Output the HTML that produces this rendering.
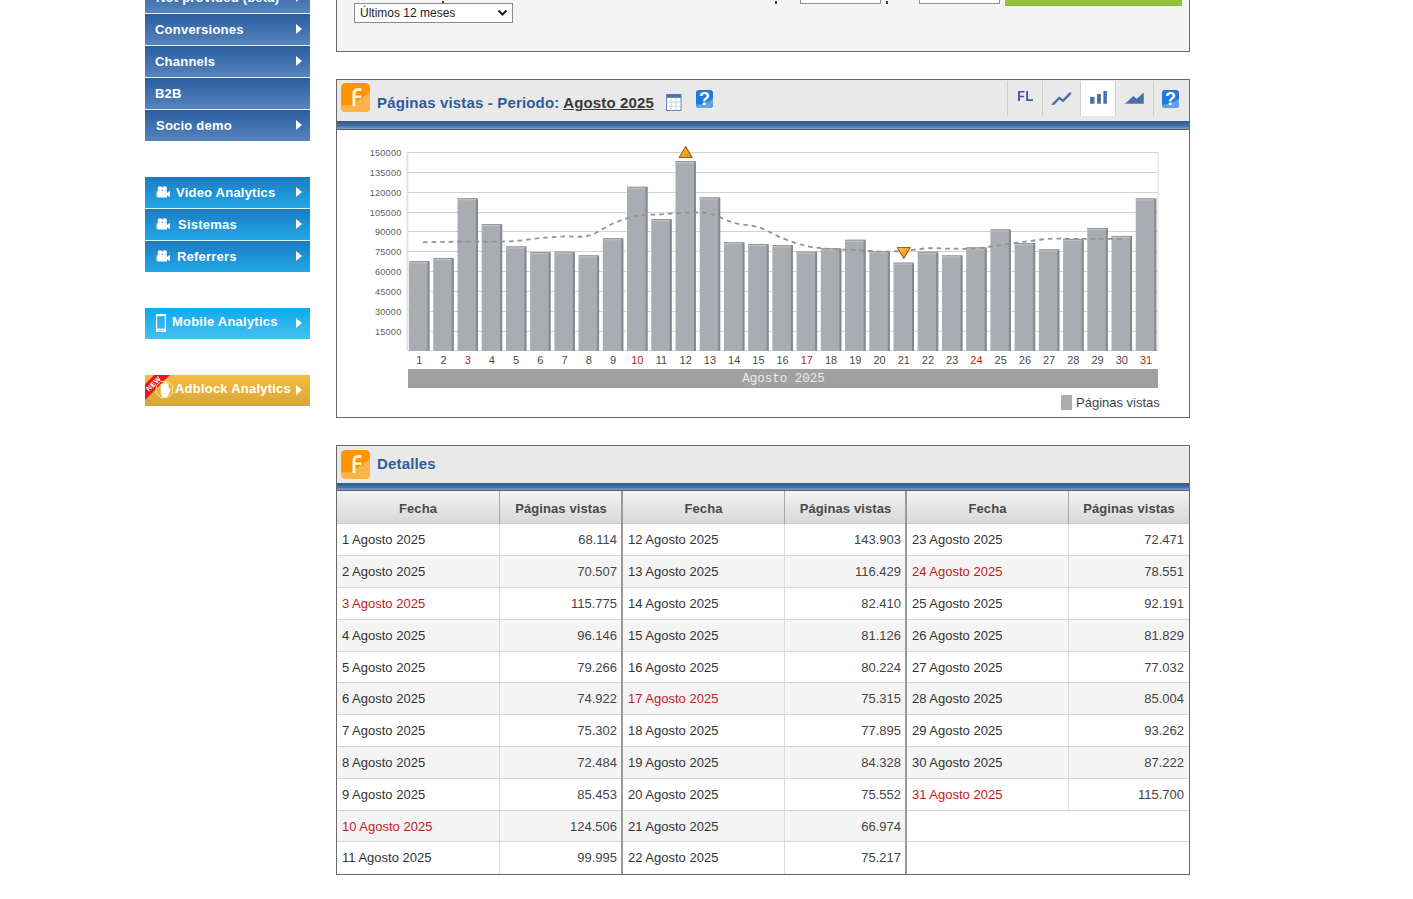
<!DOCTYPE html>
<html><head><meta charset="utf-8">
<style>
*{box-sizing:border-box;margin:0;padding:0}
html,body{width:1413px;height:899px;overflow:hidden;background:#fff;font-family:"Liberation Sans",sans-serif}
.abs{position:absolute}
.nav{position:absolute;left:145px;width:165px;height:31px;color:#fff;font-weight:bold;font-size:13px;line-height:31px;white-space:nowrap;letter-spacing:0.22px}
.dk{background:linear-gradient(#2b5c9e,#3a6cab 35%,#5584bb)}
.lb{background:linear-gradient(#1c7bc0,#1f95d6 55%,#22a6e6)}
.mb{background:linear-gradient(#0eaaee,#2bb6f0 55%,#47c1ef)}
.ad{background:linear-gradient(#f5be3b,#e7b03c 55%,#d6a33d)}
.sep{position:absolute;left:145px;width:165px;height:1px;background:#e6f7ff}
.arr{position:absolute;left:151px;top:10px;width:0;height:0;border-left:6px solid #fff;border-top:5px solid transparent;border-bottom:5px solid transparent}
.panel{position:absolute;left:336px;width:854px;border:1px solid #6a6a6a}
.hdr{position:absolute;left:0;top:0;width:852px;background:#e9e9e9}
.stripe{position:absolute;left:0;width:852px;height:9px;background:linear-gradient(#3d5c82 0,#3d5c82 1px,#2d5f9b 1px,#4a7bb2 6px,#7d9ac0 7px,#7d9ac0 8px,#545f72 8px)}
.title{position:absolute;left:40px;font-weight:bold;font-size:15px;letter-spacing:0.16px;color:#2f5c9a;white-space:nowrap}
.ficon{position:absolute;left:4px;width:29px;height:29px}
.th{position:absolute;height:33px;line-height:35px;text-align:center;letter-spacing:0.1px;font-weight:bold;font-size:13px;color:#4a4a4a;background:linear-gradient(#f3f3f3,#e6e6e6 45%,#d8d8d8 97%,#cdcdcd 97%)}
.tr{position:absolute}
.td{position:absolute;font-size:13px;line-height:32px;color:#444;white-space:nowrap}
.num{text-align:right}
.vsep{position:absolute;width:1px;background:#dadada}
.hsep{position:absolute;height:1px;background:#d6d6d6}
</style></head><body>

<!-- sidebar -->
<div class="nav dk" style="top:-18px"><span class="abs" style="left:11px;top:0">Not provided (beta)</span><i class="arr"></i></div>
<div class="nav dk" style="top:14px"><span class="abs" style="left:10px">Conversiones</span><i class="arr" style="left:151px"></i></div>
<div class="nav dk" style="top:46px"><span class="abs" style="left:10px">Channels</span><i class="arr"></i></div>
<div class="nav dk" style="top:78px"><span class="abs" style="left:10px">B2B</span></div>
<div class="nav dk" style="top:110px"><span class="abs" style="left:11px">Socio demo</span><i class="arr"></i></div>
<div class="sep" style="top:13px"></div><div class="sep" style="top:45px"></div><div class="sep" style="top:77px"></div><div class="sep" style="top:109px"></div>

<div class="nav lb" style="top:177px"><svg class="abs" style="left:11px;top:9px" width="15" height="13" viewBox="0 0 15 13"><circle cx="4" cy="2.6" r="2.4" fill="#fff"/><circle cx="8.6" cy="2.6" r="2.4" fill="#fff"/><rect x="1.5" y="4.5" width="9.5" height="7" fill="#fff"/><path d="M0.5,5.5 L1.6,5.5 L1.6,10.5 L0.5,10.5Z" fill="#fff"/><path d="M11,7 L14,4.8 L14,11.2 L11,9Z" fill="#fff"/></svg><span class="abs" style="left:31px;top:-0.5px">Video Analytics</span><i class="arr"></i></div>
<div class="nav lb" style="top:209px"><svg class="abs" style="left:11px;top:9px" width="15" height="13" viewBox="0 0 15 13"><circle cx="4" cy="2.6" r="2.4" fill="#fff"/><circle cx="8.6" cy="2.6" r="2.4" fill="#fff"/><rect x="1.5" y="4.5" width="9.5" height="7" fill="#fff"/><path d="M0.5,5.5 L1.6,5.5 L1.6,10.5 L0.5,10.5Z" fill="#fff"/><path d="M11,7 L14,4.8 L14,11.2 L11,9Z" fill="#fff"/></svg><span class="abs" style="left:33px">Sistemas</span><i class="arr"></i></div>
<div class="nav lb" style="top:241px"><svg class="abs" style="left:11px;top:9px" width="15" height="13" viewBox="0 0 15 13"><circle cx="4" cy="2.6" r="2.4" fill="#fff"/><circle cx="8.6" cy="2.6" r="2.4" fill="#fff"/><rect x="1.5" y="4.5" width="9.5" height="7" fill="#fff"/><path d="M0.5,5.5 L1.6,5.5 L1.6,10.5 L0.5,10.5Z" fill="#fff"/><path d="M11,7 L14,4.8 L14,11.2 L11,9Z" fill="#fff"/></svg><span class="abs" style="left:32px">Referrers</span><i class="arr"></i></div>
<div class="sep" style="top:208px;background:#dff3fb"></div><div class="sep" style="top:240px;background:#dff3fb"></div>

<div class="nav mb" style="top:308px"><svg class="abs" style="left:11px;top:6px" width="10" height="18" viewBox="0 0 10 18"><rect x="0.6" y="0.6" width="8.8" height="16.8" fill="none" stroke="#fff" stroke-width="1.2"/><rect x="0" y="0" width="10" height="2.2" fill="#fff"/><rect x="0" y="14.6" width="10" height="3.4" fill="#fff"/><rect x="2.2" y="15.8" width="1.2" height="1" fill="#6ab8e0"/><rect x="4.4" y="15.8" width="1.2" height="1" fill="#6ab8e0"/><rect x="6.6" y="15.8" width="1.2" height="1" fill="#6ab8e0"/></svg><span class="abs" style="left:27px;top:-2px">Mobile Analytics</span><i class="arr"></i></div>

<div class="nav ad" style="top:375px;overflow:hidden"><svg class="abs" style="left:0;top:0" width="40" height="31" viewBox="0 0 40 31"><path d="M9.2,0 L25,0 L0,25 L0,9.2Z" fill="#e8141b"/><text x="0" y="0" transform="translate(8.5,8.7) rotate(-45)" text-anchor="middle" dominant-baseline="central" font-family="Liberation Sans" font-weight="bold" font-size="7.2" fill="#fff">NEW</text><path d="M16,6.3 L22.8,6.3 L27.6,11.1 L27.6,17.9 L22.8,22.7 L16,22.7 L11.2,17.9 L11.2,11.1Z" fill="none" stroke="#ffeaa6" stroke-width="1"/><path d="M16.6,9.6 L16.6,17.5 Q16.6,21.5 20,21.5 Q22.3,21.5 23.2,19 L24.6,14.4 Q24.4,13.3 23.4,13.9 L22.7,15.3 L22.7,9.2 M18.7,8.6 L18.7,15 M20.7,7.9 L20.7,15" fill="#fff" stroke="#fff" stroke-width="1.7" stroke-linecap="round" stroke-linejoin="round"/></svg><span class="abs" style="left:30px;top:-2px">Adblock Analytics</span><i class="arr"></i></div>

<!-- top panel -->
<div class="panel" style="top:-50px;height:102px;background:#f4f4f4">
  <div class="abs" style="left:17px;top:52px;width:159px;height:20px;background:#fff;border:1px solid #8a8a8a;font-size:12px;line-height:18px;color:#222;padding-left:5px">Últimos 12 meses<svg class="abs" style="left:142px;top:5px" width="11" height="8" viewBox="0 0 11 8"><path d="M1.5,1.5 L5.5,5.5 L9.5,1.5" fill="none" stroke="#222" stroke-width="2"/></svg></div>
  <div class="abs" style="left:463px;top:29px;width:81px;height:24px;background:#fff;border:1px solid #8f8f8f"></div>
  <div class="abs" style="left:582px;top:29px;width:81px;height:24px;background:#fff;border:1px solid #8f8f8f"></div>
  <div class="abs" style="left:668px;top:24px;width:177px;height:31px;background:#92c43a;border-bottom:1px solid #89b84a"></div>
  <div class="abs" style="left:438px;top:50px;width:2px;height:3px;background:#444"></div>
  <div class="abs" style="left:549px;top:50px;width:2px;height:3px;background:#345"></div>
  <div class="abs" style="left:105px;top:50px;width:2px;height:2px;background:#444"></div>
</div>

<!-- chart panel -->
<div class="panel" style="top:79px;height:339px;background:#fff">
  <div class="hdr" style="height:41px"></div>
  <div class="stripe" style="top:41px"></div>
  <div class="ficon" style="top:3px"><svg class="abs" style="left:0;top:0" width="29" height="29" viewBox="0 0 29 29"><rect x="0" y="0" width="29" height="29" rx="4.5" fill="#ff9500"/><path d="M0,22.3 L11,22.3 L14.7,19 Q22,15.5 29,8.5 L29,24.5 Q29,29 24.5,29 L4.5,29 Q0,29 0,24.5Z" fill="#ffb44a"/><path d="M12.9,23 L12.9,11 Q12.9,6.4 17.2,6.4 L20.3,6.4" fill="none" stroke="#fff4dc" stroke-width="3"/><path d="M12.9,13.7 H20.3" stroke="#fff4dc" stroke-width="2.4"/></svg></div>
  <div class="title" style="top:13px;line-height:20px">Páginas vistas - Periodo: <span style="color:#3a3a3a;text-decoration:underline">Agosto 2025</span></div>
  <!-- calendar -->
  <svg class="abs" style="left:329px;top:14px" width="16" height="17" viewBox="0 0 16 17"><rect x="0.5" y="0.5" width="14.5" height="16" fill="#fdfdff" stroke="#5f80ae"/><rect x="0.5" y="0.5" width="14.5" height="3.3" fill="#4d72a8"/><path d="M5.3,4 V16.5 M10.1,4 V16.5 M0.5,8.2 H15 M0.5,12.3 H15" stroke="#cdd6e2" stroke-width="1"/></svg>
  <!-- help -->
  <svg class="abs" style="left:359px;top:10px" width="17" height="18" viewBox="0 0 17 18"><defs><clipPath id="hc"><rect x="0" y="0" width="17" height="18" rx="3"/></clipPath></defs><g clip-path="url(#hc)"><rect x="0" y="0" width="17" height="18" fill="#1f7ad8"/><path d="M0,14.8 Q9,14.2 17,8.8 L17,18 L0,18Z" fill="#62a3e8"/></g><text x="8.5" y="15.2" text-anchor="middle" font-family="Liberation Sans" font-weight="bold" font-size="18" fill="#fff">?</text></svg>
  <!-- right tools -->
  <div class="abs" style="left:670px;top:1px;width:1px;height:35px;background:#cfcfcf"></div>
  <div class="abs" style="left:705px;top:1px;width:1px;height:35px;background:#cfcfcf"></div>
  <div class="abs" style="left:744px;top:1px;width:34px;height:35px;background:#fff"></div>
  <div class="abs" style="left:743px;top:1px;width:1px;height:35px;background:#cfcfcf"></div>
  <div class="abs" style="left:778px;top:1px;width:1px;height:35px;background:#cfcfcf"></div>
  <div class="abs" style="left:816px;top:1px;width:1px;height:35px;background:#cfcfcf"></div>
  <svg class="abs" style="left:680px;top:11px" width="16" height="11" viewBox="0 0 16 11"><path d="M1.1,0 H7.5 V1.6 H3 V4.8 H7 V6.3 H3 V10 H1.1Z M9.2,0 H11 V8.3 H16 V10 H9.2Z" fill="#3b5a9c"/></svg>
  <svg class="abs" style="left:714px;top:11px" width="22" height="14" viewBox="0 0 22 14"><path d="M2,13.35 L8.4,6.9 L12,9.9 L19.2,2.4" fill="none" stroke="#4670a8" stroke-width="2.3" stroke-linecap="round" stroke-linejoin="round"/></svg>
  <svg class="abs" style="left:752px;top:10px" width="20" height="16" viewBox="0 0 20 16"><rect x="1.1" y="6.9" width="4.4" height="6.85" fill="#4470ab"/><rect x="8" y="4" width="3.9" height="9.75" fill="#4470ab"/><rect x="14.4" y="1.07" width="3.5" height="12.68" fill="#4470ab"/></svg>
  <svg class="abs" style="left:787px;top:10px" width="22" height="16" viewBox="0 0 22 16"><path d="M1.07,13.75 L9.3,6.1 L12.7,8.8 L19.75,2.4 L19.75,13.75Z" fill="#4470ab"/></svg>
  <svg class="abs" style="left:825px;top:10px" width="17" height="18" viewBox="0 0 17 18"><g clip-path="url(#hc)"><rect x="0" y="0" width="17" height="18" fill="#1f7ad8"/><path d="M0,14.8 Q9,14.2 17,8.8 L17,18 L0,18Z" fill="#62a3e8"/></g><text x="8.5" y="15.2" text-anchor="middle" font-family="Liberation Sans" font-weight="bold" font-size="18" fill="#fff">?</text></svg>
  <div class="abs" style="left:724px;top:315px;width:11px;height:15px;background:#a9adb1"></div>
  <div class="abs" style="left:739px;top:314px;font-size:13px;line-height:18px;color:#444">Páginas vistas</div>
</div>
<div class="abs" style="left:0;top:0"><svg width="1413" height="430" style="position:absolute;left:0;top:0">
<defs><linearGradient id="tri" x1="0" y1="0" x2="1" y2="1"><stop offset="0" stop-color="#ffc060"/><stop offset="0.6" stop-color="#ff9c14"/><stop offset="1" stop-color="#f08800"/></linearGradient></defs>
<line x1="407" y1="331.5" x2="1158" y2="331.5" stroke="#d2d2d2" stroke-width="1"/>
<text x="401.5" y="334.8" text-anchor="end" font-family="Liberation Sans" font-size="9.2" letter-spacing="0.2" fill="#606060">15000</text>
<line x1="407" y1="311.5" x2="1158" y2="311.5" stroke="#d2d2d2" stroke-width="1"/>
<text x="401.5" y="314.8" text-anchor="end" font-family="Liberation Sans" font-size="9.2" letter-spacing="0.2" fill="#606060">30000</text>
<line x1="407" y1="291.5" x2="1158" y2="291.5" stroke="#d2d2d2" stroke-width="1"/>
<text x="401.5" y="294.8" text-anchor="end" font-family="Liberation Sans" font-size="9.2" letter-spacing="0.2" fill="#606060">45000</text>
<line x1="407" y1="271.5" x2="1158" y2="271.5" stroke="#d2d2d2" stroke-width="1"/>
<text x="401.5" y="274.8" text-anchor="end" font-family="Liberation Sans" font-size="9.2" letter-spacing="0.2" fill="#606060">60000</text>
<line x1="407" y1="251.5" x2="1158" y2="251.5" stroke="#d2d2d2" stroke-width="1"/>
<text x="401.5" y="254.8" text-anchor="end" font-family="Liberation Sans" font-size="9.2" letter-spacing="0.2" fill="#606060">75000</text>
<line x1="407" y1="231.5" x2="1158" y2="231.5" stroke="#d2d2d2" stroke-width="1"/>
<text x="401.5" y="234.8" text-anchor="end" font-family="Liberation Sans" font-size="9.2" letter-spacing="0.2" fill="#606060">90000</text>
<line x1="407" y1="212.5" x2="1158" y2="212.5" stroke="#d2d2d2" stroke-width="1"/>
<text x="401.5" y="215.8" text-anchor="end" font-family="Liberation Sans" font-size="9.2" letter-spacing="0.2" fill="#606060">105000</text>
<line x1="407" y1="192.5" x2="1158" y2="192.5" stroke="#d2d2d2" stroke-width="1"/>
<text x="401.5" y="195.8" text-anchor="end" font-family="Liberation Sans" font-size="9.2" letter-spacing="0.2" fill="#606060">120000</text>
<line x1="407" y1="172.5" x2="1158" y2="172.5" stroke="#d2d2d2" stroke-width="1"/>
<text x="401.5" y="175.8" text-anchor="end" font-family="Liberation Sans" font-size="9.2" letter-spacing="0.2" fill="#606060">135000</text>
<line x1="407" y1="152.5" x2="1158" y2="152.5" stroke="#d2d2d2" stroke-width="1"/>
<text x="401.5" y="155.8" text-anchor="end" font-family="Liberation Sans" font-size="9.2" letter-spacing="0.2" fill="#606060">150000</text>
<rect x="406.5" y="152" width="2" height="199" fill="#e0e0e0"/>
<line x1="1158" y1="152" x2="1158" y2="351" stroke="#d8d8d8" stroke-width="1"/>
<rect x="407" y="350" width="751" height="1" fill="#dcdcdc"/>
<rect x="409.00" y="261.14" width="20.5" height="89.86" fill="#a9adb1"/>
<rect x="409.00" y="261.14" width="20.5" height="1" fill="#909498"/>
<rect x="409.00" y="262.14" width="18.5" height="1" fill="#c2c6ca"/>
<rect x="427.50" y="262.14" width="2" height="88.86" fill="#85898d"/>
<text x="419.25" y="364" text-anchor="middle" font-family="Liberation Sans" font-size="11" fill="#4a4a4a">1</text>
<rect x="433.23" y="257.98" width="20.5" height="93.02" fill="#a9adb1"/>
<rect x="433.23" y="257.98" width="20.5" height="1" fill="#909498"/>
<rect x="433.23" y="258.98" width="18.5" height="1" fill="#c2c6ca"/>
<rect x="451.73" y="258.98" width="2" height="92.02" fill="#85898d"/>
<text x="443.48" y="364" text-anchor="middle" font-family="Liberation Sans" font-size="11" fill="#4a4a4a">2</text>
<rect x="457.45" y="198.26" width="20.5" height="152.74" fill="#a9adb1"/>
<rect x="457.45" y="198.26" width="20.5" height="1" fill="#909498"/>
<rect x="457.45" y="199.26" width="18.5" height="1" fill="#c2c6ca"/>
<rect x="475.95" y="199.26" width="2" height="151.74" fill="#85898d"/>
<text x="467.70" y="364" text-anchor="middle" font-family="Liberation Sans" font-size="11" fill="#c41a1a">3</text>
<rect x="481.68" y="224.16" width="20.5" height="126.84" fill="#a9adb1"/>
<rect x="481.68" y="224.16" width="20.5" height="1" fill="#909498"/>
<rect x="481.68" y="225.16" width="18.5" height="1" fill="#c2c6ca"/>
<rect x="500.18" y="225.16" width="2" height="125.84" fill="#85898d"/>
<text x="491.93" y="364" text-anchor="middle" font-family="Liberation Sans" font-size="11" fill="#4a4a4a">4</text>
<rect x="505.90" y="246.43" width="20.5" height="104.57" fill="#a9adb1"/>
<rect x="505.90" y="246.43" width="20.5" height="1" fill="#909498"/>
<rect x="505.90" y="247.43" width="18.5" height="1" fill="#c2c6ca"/>
<rect x="524.40" y="247.43" width="2" height="103.57" fill="#85898d"/>
<text x="516.15" y="364" text-anchor="middle" font-family="Liberation Sans" font-size="11" fill="#4a4a4a">5</text>
<rect x="530.13" y="252.16" width="20.5" height="98.84" fill="#a9adb1"/>
<rect x="530.13" y="252.16" width="20.5" height="1" fill="#909498"/>
<rect x="530.13" y="253.16" width="18.5" height="1" fill="#c2c6ca"/>
<rect x="548.63" y="253.16" width="2" height="97.84" fill="#85898d"/>
<text x="540.38" y="364" text-anchor="middle" font-family="Liberation Sans" font-size="11" fill="#4a4a4a">6</text>
<rect x="554.35" y="251.66" width="20.5" height="99.34" fill="#a9adb1"/>
<rect x="554.35" y="251.66" width="20.5" height="1" fill="#909498"/>
<rect x="554.35" y="252.66" width="18.5" height="1" fill="#c2c6ca"/>
<rect x="572.85" y="252.66" width="2" height="98.34" fill="#85898d"/>
<text x="564.60" y="364" text-anchor="middle" font-family="Liberation Sans" font-size="11" fill="#4a4a4a">7</text>
<rect x="578.58" y="255.37" width="20.5" height="95.63" fill="#a9adb1"/>
<rect x="578.58" y="255.37" width="20.5" height="1" fill="#909498"/>
<rect x="578.58" y="256.37" width="18.5" height="1" fill="#c2c6ca"/>
<rect x="597.08" y="256.37" width="2" height="94.63" fill="#85898d"/>
<text x="588.83" y="364" text-anchor="middle" font-family="Liberation Sans" font-size="11" fill="#4a4a4a">8</text>
<rect x="602.81" y="238.27" width="20.5" height="112.73" fill="#a9adb1"/>
<rect x="602.81" y="238.27" width="20.5" height="1" fill="#909498"/>
<rect x="602.81" y="239.27" width="18.5" height="1" fill="#c2c6ca"/>
<rect x="621.31" y="239.27" width="2" height="111.73" fill="#85898d"/>
<text x="613.06" y="364" text-anchor="middle" font-family="Liberation Sans" font-size="11" fill="#4a4a4a">9</text>
<rect x="627.03" y="186.74" width="20.5" height="164.26" fill="#a9adb1"/>
<rect x="627.03" y="186.74" width="20.5" height="1" fill="#909498"/>
<rect x="627.03" y="187.74" width="18.5" height="1" fill="#c2c6ca"/>
<rect x="645.53" y="187.74" width="2" height="163.26" fill="#85898d"/>
<text x="637.28" y="364" text-anchor="middle" font-family="Liberation Sans" font-size="11" fill="#c41a1a">10</text>
<rect x="651.26" y="219.08" width="20.5" height="131.92" fill="#a9adb1"/>
<rect x="651.26" y="219.08" width="20.5" height="1" fill="#909498"/>
<rect x="651.26" y="220.08" width="18.5" height="1" fill="#c2c6ca"/>
<rect x="669.76" y="220.08" width="2" height="130.92" fill="#85898d"/>
<text x="661.51" y="364" text-anchor="middle" font-family="Liberation Sans" font-size="11" fill="#4a4a4a">11</text>
<rect x="675.48" y="161.15" width="20.5" height="189.85" fill="#a9adb1"/>
<rect x="675.48" y="161.15" width="20.5" height="1" fill="#909498"/>
<rect x="675.48" y="162.15" width="18.5" height="1" fill="#c2c6ca"/>
<rect x="693.98" y="162.15" width="2" height="188.85" fill="#85898d"/>
<text x="685.73" y="364" text-anchor="middle" font-family="Liberation Sans" font-size="11" fill="#4a4a4a">12</text>
<rect x="699.71" y="197.40" width="20.5" height="153.60" fill="#a9adb1"/>
<rect x="699.71" y="197.40" width="20.5" height="1" fill="#909498"/>
<rect x="699.71" y="198.40" width="18.5" height="1" fill="#c2c6ca"/>
<rect x="718.21" y="198.40" width="2" height="152.60" fill="#85898d"/>
<text x="709.96" y="364" text-anchor="middle" font-family="Liberation Sans" font-size="11" fill="#4a4a4a">13</text>
<rect x="723.94" y="242.28" width="20.5" height="108.72" fill="#a9adb1"/>
<rect x="723.94" y="242.28" width="20.5" height="1" fill="#909498"/>
<rect x="723.94" y="243.28" width="18.5" height="1" fill="#c2c6ca"/>
<rect x="742.44" y="243.28" width="2" height="107.72" fill="#85898d"/>
<text x="734.19" y="364" text-anchor="middle" font-family="Liberation Sans" font-size="11" fill="#4a4a4a">14</text>
<rect x="748.16" y="243.97" width="20.5" height="107.03" fill="#a9adb1"/>
<rect x="748.16" y="243.97" width="20.5" height="1" fill="#909498"/>
<rect x="748.16" y="244.97" width="18.5" height="1" fill="#c2c6ca"/>
<rect x="766.66" y="244.97" width="2" height="106.03" fill="#85898d"/>
<text x="758.41" y="364" text-anchor="middle" font-family="Liberation Sans" font-size="11" fill="#4a4a4a">15</text>
<rect x="772.39" y="245.16" width="20.5" height="105.84" fill="#a9adb1"/>
<rect x="772.39" y="245.16" width="20.5" height="1" fill="#909498"/>
<rect x="772.39" y="246.16" width="18.5" height="1" fill="#c2c6ca"/>
<rect x="790.89" y="246.16" width="2" height="104.84" fill="#85898d"/>
<text x="782.64" y="364" text-anchor="middle" font-family="Liberation Sans" font-size="11" fill="#4a4a4a">16</text>
<rect x="796.61" y="251.64" width="20.5" height="99.36" fill="#a9adb1"/>
<rect x="796.61" y="251.64" width="20.5" height="1" fill="#909498"/>
<rect x="796.61" y="252.64" width="18.5" height="1" fill="#c2c6ca"/>
<rect x="815.11" y="252.64" width="2" height="98.36" fill="#85898d"/>
<text x="806.86" y="364" text-anchor="middle" font-family="Liberation Sans" font-size="11" fill="#c41a1a">17</text>
<rect x="820.84" y="248.24" width="20.5" height="102.76" fill="#a9adb1"/>
<rect x="820.84" y="248.24" width="20.5" height="1" fill="#909498"/>
<rect x="820.84" y="249.24" width="18.5" height="1" fill="#c2c6ca"/>
<rect x="839.34" y="249.24" width="2" height="101.76" fill="#85898d"/>
<text x="831.09" y="364" text-anchor="middle" font-family="Liberation Sans" font-size="11" fill="#4a4a4a">18</text>
<rect x="845.06" y="239.75" width="20.5" height="111.25" fill="#a9adb1"/>
<rect x="845.06" y="239.75" width="20.5" height="1" fill="#909498"/>
<rect x="845.06" y="240.75" width="18.5" height="1" fill="#c2c6ca"/>
<rect x="863.56" y="240.75" width="2" height="110.25" fill="#85898d"/>
<text x="855.31" y="364" text-anchor="middle" font-family="Liberation Sans" font-size="11" fill="#4a4a4a">19</text>
<rect x="869.29" y="251.33" width="20.5" height="99.67" fill="#a9adb1"/>
<rect x="869.29" y="251.33" width="20.5" height="1" fill="#909498"/>
<rect x="869.29" y="252.33" width="18.5" height="1" fill="#c2c6ca"/>
<rect x="887.79" y="252.33" width="2" height="98.67" fill="#85898d"/>
<text x="879.54" y="364" text-anchor="middle" font-family="Liberation Sans" font-size="11" fill="#4a4a4a">20</text>
<rect x="893.52" y="262.64" width="20.5" height="88.36" fill="#a9adb1"/>
<rect x="893.52" y="262.64" width="20.5" height="1" fill="#909498"/>
<rect x="893.52" y="263.64" width="18.5" height="1" fill="#c2c6ca"/>
<rect x="912.02" y="263.64" width="2" height="87.36" fill="#85898d"/>
<text x="903.77" y="364" text-anchor="middle" font-family="Liberation Sans" font-size="11" fill="#4a4a4a">21</text>
<rect x="917.74" y="251.77" width="20.5" height="99.23" fill="#a9adb1"/>
<rect x="917.74" y="251.77" width="20.5" height="1" fill="#909498"/>
<rect x="917.74" y="252.77" width="18.5" height="1" fill="#c2c6ca"/>
<rect x="936.24" y="252.77" width="2" height="98.23" fill="#85898d"/>
<text x="927.99" y="364" text-anchor="middle" font-family="Liberation Sans" font-size="11" fill="#4a4a4a">22</text>
<rect x="941.97" y="255.39" width="20.5" height="95.61" fill="#a9adb1"/>
<rect x="941.97" y="255.39" width="20.5" height="1" fill="#909498"/>
<rect x="941.97" y="256.39" width="18.5" height="1" fill="#c2c6ca"/>
<rect x="960.47" y="256.39" width="2" height="94.61" fill="#85898d"/>
<text x="952.22" y="364" text-anchor="middle" font-family="Liberation Sans" font-size="11" fill="#4a4a4a">23</text>
<rect x="966.19" y="247.37" width="20.5" height="103.63" fill="#a9adb1"/>
<rect x="966.19" y="247.37" width="20.5" height="1" fill="#909498"/>
<rect x="966.19" y="248.37" width="18.5" height="1" fill="#c2c6ca"/>
<rect x="984.69" y="248.37" width="2" height="102.63" fill="#85898d"/>
<text x="976.44" y="364" text-anchor="middle" font-family="Liberation Sans" font-size="11" fill="#c41a1a">24</text>
<rect x="990.42" y="229.38" width="20.5" height="121.62" fill="#a9adb1"/>
<rect x="990.42" y="229.38" width="20.5" height="1" fill="#909498"/>
<rect x="990.42" y="230.38" width="18.5" height="1" fill="#c2c6ca"/>
<rect x="1008.92" y="230.38" width="2" height="120.62" fill="#85898d"/>
<text x="1000.67" y="364" text-anchor="middle" font-family="Liberation Sans" font-size="11" fill="#4a4a4a">25</text>
<rect x="1014.65" y="243.05" width="20.5" height="107.95" fill="#a9adb1"/>
<rect x="1014.65" y="243.05" width="20.5" height="1" fill="#909498"/>
<rect x="1014.65" y="244.05" width="18.5" height="1" fill="#c2c6ca"/>
<rect x="1033.15" y="244.05" width="2" height="106.95" fill="#85898d"/>
<text x="1024.90" y="364" text-anchor="middle" font-family="Liberation Sans" font-size="11" fill="#4a4a4a">26</text>
<rect x="1038.87" y="249.37" width="20.5" height="101.63" fill="#a9adb1"/>
<rect x="1038.87" y="249.37" width="20.5" height="1" fill="#909498"/>
<rect x="1038.87" y="250.37" width="18.5" height="1" fill="#c2c6ca"/>
<rect x="1057.37" y="250.37" width="2" height="100.63" fill="#85898d"/>
<text x="1049.12" y="364" text-anchor="middle" font-family="Liberation Sans" font-size="11" fill="#4a4a4a">27</text>
<rect x="1063.10" y="238.86" width="20.5" height="112.14" fill="#a9adb1"/>
<rect x="1063.10" y="238.86" width="20.5" height="1" fill="#909498"/>
<rect x="1063.10" y="239.86" width="18.5" height="1" fill="#c2c6ca"/>
<rect x="1081.60" y="239.86" width="2" height="111.14" fill="#85898d"/>
<text x="1073.35" y="364" text-anchor="middle" font-family="Liberation Sans" font-size="11" fill="#4a4a4a">28</text>
<rect x="1087.32" y="227.96" width="20.5" height="123.04" fill="#a9adb1"/>
<rect x="1087.32" y="227.96" width="20.5" height="1" fill="#909498"/>
<rect x="1087.32" y="228.96" width="18.5" height="1" fill="#c2c6ca"/>
<rect x="1105.82" y="228.96" width="2" height="122.04" fill="#85898d"/>
<text x="1097.57" y="364" text-anchor="middle" font-family="Liberation Sans" font-size="11" fill="#4a4a4a">29</text>
<rect x="1111.55" y="235.93" width="20.5" height="115.07" fill="#a9adb1"/>
<rect x="1111.55" y="235.93" width="20.5" height="1" fill="#909498"/>
<rect x="1111.55" y="236.93" width="18.5" height="1" fill="#c2c6ca"/>
<rect x="1130.05" y="236.93" width="2" height="114.07" fill="#85898d"/>
<text x="1121.80" y="364" text-anchor="middle" font-family="Liberation Sans" font-size="11" fill="#4a4a4a">30</text>
<rect x="1135.77" y="198.36" width="20.5" height="152.64" fill="#a9adb1"/>
<rect x="1135.77" y="198.36" width="20.5" height="1" fill="#909498"/>
<rect x="1135.77" y="199.36" width="18.5" height="1" fill="#c2c6ca"/>
<rect x="1154.27" y="199.36" width="2" height="151.64" fill="#85898d"/>
<text x="1146.02" y="364" text-anchor="middle" font-family="Liberation Sans" font-size="11" fill="#c41a1a">31</text>
<path d="M423.00,242.28 C426.41,242.22 436.03,241.98 443.48,241.88 C450.93,241.78 459.63,241.72 467.70,241.68 C475.78,241.65 483.85,241.82 491.93,241.68 C500.00,241.55 508.08,241.47 516.15,240.86 C524.23,240.25 532.30,238.79 540.38,238.04 C548.45,237.30 556.53,236.79 564.60,236.40 C572.68,236.00 580.76,237.82 588.83,235.67 C596.91,233.52 604.98,226.82 613.06,223.49 C621.13,220.16 629.21,217.20 637.28,215.67 C645.36,214.14 653.43,214.82 661.51,214.33 C669.58,213.83 677.66,212.81 685.73,212.70 C693.81,212.59 701.88,211.98 709.96,213.69 C718.03,215.39 726.11,220.72 734.19,222.96 C742.26,225.20 750.34,224.56 758.41,227.12 C766.49,229.69 774.56,235.19 782.64,238.35 C790.71,241.50 798.79,244.28 806.86,246.05 C814.94,247.82 823.01,248.29 831.09,248.96 C839.16,249.63 847.24,249.65 855.31,250.08 C863.39,250.50 871.47,251.40 879.54,251.54 C887.62,251.68 895.69,251.48 903.77,250.93 C911.84,250.38 919.92,248.60 927.99,248.23 C936.07,247.86 944.14,248.67 952.22,248.70 C960.29,248.74 968.37,249.04 976.44,248.42 C984.52,247.81 992.59,246.16 1000.67,245.03 C1008.74,243.89 1016.82,242.66 1024.90,241.63 C1032.97,240.60 1041.05,239.31 1049.12,238.85 C1057.20,238.38 1065.27,238.85 1073.35,238.85 C1081.42,238.85 1089.50,238.85 1097.57,238.85 C1105.65,238.85 1117.76,238.85 1121.80,238.85" fill="none" stroke="#939393" stroke-width="1.8" stroke-dasharray="4.6,4"/>
<path d="M685.7,146.5 L692.2,157.5 L679.2,157.5 Z" fill="url(#tri)" stroke="#94622a" stroke-width="1.1" stroke-linejoin="round"/>
<path d="M897.3,247.5 L910.3,247.5 L903.8,258.5 Z" fill="url(#tri)" stroke="#94622a" stroke-width="1.1" stroke-linejoin="round"/>
<rect x="408" y="369" width="750" height="19" fill="#a0a0a0"/>
<text x="783.5" y="382" text-anchor="middle" font-family="Liberation Mono" font-size="12.5" fill="#ececec">Agosto 2025</text>
</svg></div>

<!-- details panel -->
<div class="panel" style="top:445px;height:430px;background:#fff">
  <div class="hdr" style="height:37px"></div>
  <div class="stripe" style="top:37px;height:8px;background:linear-gradient(#3d5c82 0,#3d5c82 1px,#2d5f9b 1px,#4a7bb2 5px,#7d9ac0 6px,#7d9ac0 7px,#545f72 7px)"></div>
  <div class="ficon" style="top:4px"><svg class="abs" style="left:0;top:0" width="29" height="29" viewBox="0 0 29 29"><rect x="0" y="0" width="29" height="29" rx="4.5" fill="#ff9500"/><path d="M0,22.3 L11,22.3 L14.7,19 Q22,15.5 29,8.5 L29,24.5 Q29,29 24.5,29 L4.5,29 Q0,29 0,24.5Z" fill="#ffb44a"/><path d="M12.9,23 L12.9,11 Q12.9,6.4 17.2,6.4 L20.3,6.4" fill="none" stroke="#fff4dc" stroke-width="3"/><path d="M12.9,13.7 H20.3" stroke="#fff4dc" stroke-width="2.4"/></svg></div>
  <div class="title" style="top:8px;line-height:20px">Detalles</div>
</div>
<div class="th" style="left:337px;top:491px;width:162px">Fecha</div>
<div class="th" style="left:500px;top:491px;width:122px">Páginas vistas</div>
<div class="vsep" style="left:499px;top:491px;height:33px;background:#a9a9a9"></div>
<div class="tr" style="left:337px;top:524.30px;width:285px;height:31.80px;background:#ffffff"></div>
<div class="td" style="left:342px;top:524.30px;color:#333">1 Agosto 2025</div>
<div class="td num" style="left:500px;width:117px;top:524.30px">68.114</div>
<div class="vsep" style="left:499px;top:524.30px;height:31.80px"></div>
<div class="hsep" style="left:337px;top:555.10px;width:285px"></div>
<div class="tr" style="left:337px;top:556.10px;width:285px;height:31.80px;background:#f4f4f4"></div>
<div class="td" style="left:342px;top:556.10px;color:#333">2 Agosto 2025</div>
<div class="td num" style="left:500px;width:117px;top:556.10px">70.507</div>
<div class="vsep" style="left:499px;top:556.10px;height:31.80px"></div>
<div class="hsep" style="left:337px;top:586.90px;width:285px"></div>
<div class="tr" style="left:337px;top:587.90px;width:285px;height:31.80px;background:#ffffff"></div>
<div class="td" style="left:342px;top:587.90px;color:#c41a1a">3 Agosto 2025</div>
<div class="td num" style="left:500px;width:117px;top:587.90px">115.775</div>
<div class="vsep" style="left:499px;top:587.90px;height:31.80px"></div>
<div class="hsep" style="left:337px;top:618.70px;width:285px"></div>
<div class="tr" style="left:337px;top:619.70px;width:285px;height:31.80px;background:#f4f4f4"></div>
<div class="td" style="left:342px;top:619.70px;color:#333">4 Agosto 2025</div>
<div class="td num" style="left:500px;width:117px;top:619.70px">96.146</div>
<div class="vsep" style="left:499px;top:619.70px;height:31.80px"></div>
<div class="hsep" style="left:337px;top:650.50px;width:285px"></div>
<div class="tr" style="left:337px;top:651.50px;width:285px;height:31.80px;background:#ffffff"></div>
<div class="td" style="left:342px;top:651.50px;color:#333">5 Agosto 2025</div>
<div class="td num" style="left:500px;width:117px;top:651.50px">79.266</div>
<div class="vsep" style="left:499px;top:651.50px;height:31.80px"></div>
<div class="hsep" style="left:337px;top:682.30px;width:285px"></div>
<div class="tr" style="left:337px;top:683.30px;width:285px;height:31.80px;background:#f4f4f4"></div>
<div class="td" style="left:342px;top:683.30px;color:#333">6 Agosto 2025</div>
<div class="td num" style="left:500px;width:117px;top:683.30px">74.922</div>
<div class="vsep" style="left:499px;top:683.30px;height:31.80px"></div>
<div class="hsep" style="left:337px;top:714.10px;width:285px"></div>
<div class="tr" style="left:337px;top:715.10px;width:285px;height:31.80px;background:#ffffff"></div>
<div class="td" style="left:342px;top:715.10px;color:#333">7 Agosto 2025</div>
<div class="td num" style="left:500px;width:117px;top:715.10px">75.302</div>
<div class="vsep" style="left:499px;top:715.10px;height:31.80px"></div>
<div class="hsep" style="left:337px;top:745.90px;width:285px"></div>
<div class="tr" style="left:337px;top:746.90px;width:285px;height:31.80px;background:#f4f4f4"></div>
<div class="td" style="left:342px;top:746.90px;color:#333">8 Agosto 2025</div>
<div class="td num" style="left:500px;width:117px;top:746.90px">72.484</div>
<div class="vsep" style="left:499px;top:746.90px;height:31.80px"></div>
<div class="hsep" style="left:337px;top:777.70px;width:285px"></div>
<div class="tr" style="left:337px;top:778.70px;width:285px;height:31.80px;background:#ffffff"></div>
<div class="td" style="left:342px;top:778.70px;color:#333">9 Agosto 2025</div>
<div class="td num" style="left:500px;width:117px;top:778.70px">85.453</div>
<div class="vsep" style="left:499px;top:778.70px;height:31.80px"></div>
<div class="hsep" style="left:337px;top:809.50px;width:285px"></div>
<div class="tr" style="left:337px;top:810.50px;width:285px;height:31.80px;background:#f4f4f4"></div>
<div class="td" style="left:342px;top:810.50px;color:#c41a1a">10 Agosto 2025</div>
<div class="td num" style="left:500px;width:117px;top:810.50px">124.506</div>
<div class="vsep" style="left:499px;top:810.50px;height:31.80px"></div>
<div class="hsep" style="left:337px;top:841.30px;width:285px"></div>
<div class="tr" style="left:337px;top:842.30px;width:285px;height:31.80px;background:#ffffff"></div>
<div class="td" style="left:342px;top:842.30px;color:#333">11 Agosto 2025</div>
<div class="td num" style="left:500px;width:117px;top:842.30px">99.995</div>
<div class="vsep" style="left:499px;top:842.30px;height:31.80px"></div>
<div class="th" style="left:623px;top:491px;width:161px">Fecha</div>
<div class="th" style="left:785px;top:491px;width:121px">Páginas vistas</div>
<div class="vsep" style="left:784px;top:491px;height:33px;background:#a9a9a9"></div>
<div class="tr" style="left:623px;top:524.30px;width:283px;height:31.80px;background:#ffffff"></div>
<div class="td" style="left:628px;top:524.30px;color:#333">12 Agosto 2025</div>
<div class="td num" style="left:785px;width:116px;top:524.30px">143.903</div>
<div class="vsep" style="left:784px;top:524.30px;height:31.80px"></div>
<div class="hsep" style="left:623px;top:555.10px;width:283px"></div>
<div class="tr" style="left:623px;top:556.10px;width:283px;height:31.80px;background:#f4f4f4"></div>
<div class="td" style="left:628px;top:556.10px;color:#333">13 Agosto 2025</div>
<div class="td num" style="left:785px;width:116px;top:556.10px">116.429</div>
<div class="vsep" style="left:784px;top:556.10px;height:31.80px"></div>
<div class="hsep" style="left:623px;top:586.90px;width:283px"></div>
<div class="tr" style="left:623px;top:587.90px;width:283px;height:31.80px;background:#ffffff"></div>
<div class="td" style="left:628px;top:587.90px;color:#333">14 Agosto 2025</div>
<div class="td num" style="left:785px;width:116px;top:587.90px">82.410</div>
<div class="vsep" style="left:784px;top:587.90px;height:31.80px"></div>
<div class="hsep" style="left:623px;top:618.70px;width:283px"></div>
<div class="tr" style="left:623px;top:619.70px;width:283px;height:31.80px;background:#f4f4f4"></div>
<div class="td" style="left:628px;top:619.70px;color:#333">15 Agosto 2025</div>
<div class="td num" style="left:785px;width:116px;top:619.70px">81.126</div>
<div class="vsep" style="left:784px;top:619.70px;height:31.80px"></div>
<div class="hsep" style="left:623px;top:650.50px;width:283px"></div>
<div class="tr" style="left:623px;top:651.50px;width:283px;height:31.80px;background:#ffffff"></div>
<div class="td" style="left:628px;top:651.50px;color:#333">16 Agosto 2025</div>
<div class="td num" style="left:785px;width:116px;top:651.50px">80.224</div>
<div class="vsep" style="left:784px;top:651.50px;height:31.80px"></div>
<div class="hsep" style="left:623px;top:682.30px;width:283px"></div>
<div class="tr" style="left:623px;top:683.30px;width:283px;height:31.80px;background:#f4f4f4"></div>
<div class="td" style="left:628px;top:683.30px;color:#c41a1a">17 Agosto 2025</div>
<div class="td num" style="left:785px;width:116px;top:683.30px">75.315</div>
<div class="vsep" style="left:784px;top:683.30px;height:31.80px"></div>
<div class="hsep" style="left:623px;top:714.10px;width:283px"></div>
<div class="tr" style="left:623px;top:715.10px;width:283px;height:31.80px;background:#ffffff"></div>
<div class="td" style="left:628px;top:715.10px;color:#333">18 Agosto 2025</div>
<div class="td num" style="left:785px;width:116px;top:715.10px">77.895</div>
<div class="vsep" style="left:784px;top:715.10px;height:31.80px"></div>
<div class="hsep" style="left:623px;top:745.90px;width:283px"></div>
<div class="tr" style="left:623px;top:746.90px;width:283px;height:31.80px;background:#f4f4f4"></div>
<div class="td" style="left:628px;top:746.90px;color:#333">19 Agosto 2025</div>
<div class="td num" style="left:785px;width:116px;top:746.90px">84.328</div>
<div class="vsep" style="left:784px;top:746.90px;height:31.80px"></div>
<div class="hsep" style="left:623px;top:777.70px;width:283px"></div>
<div class="tr" style="left:623px;top:778.70px;width:283px;height:31.80px;background:#ffffff"></div>
<div class="td" style="left:628px;top:778.70px;color:#333">20 Agosto 2025</div>
<div class="td num" style="left:785px;width:116px;top:778.70px">75.552</div>
<div class="vsep" style="left:784px;top:778.70px;height:31.80px"></div>
<div class="hsep" style="left:623px;top:809.50px;width:283px"></div>
<div class="tr" style="left:623px;top:810.50px;width:283px;height:31.80px;background:#f4f4f4"></div>
<div class="td" style="left:628px;top:810.50px;color:#333">21 Agosto 2025</div>
<div class="td num" style="left:785px;width:116px;top:810.50px">66.974</div>
<div class="vsep" style="left:784px;top:810.50px;height:31.80px"></div>
<div class="hsep" style="left:623px;top:841.30px;width:283px"></div>
<div class="tr" style="left:623px;top:842.30px;width:283px;height:31.80px;background:#ffffff"></div>
<div class="td" style="left:628px;top:842.30px;color:#333">22 Agosto 2025</div>
<div class="td num" style="left:785px;width:116px;top:842.30px">75.217</div>
<div class="vsep" style="left:784px;top:842.30px;height:31.80px"></div>
<div class="th" style="left:907px;top:491px;width:161px">Fecha</div>
<div class="th" style="left:1069px;top:491px;width:120px">Páginas vistas</div>
<div class="vsep" style="left:1068px;top:491px;height:33px;background:#a9a9a9"></div>
<div class="tr" style="left:907px;top:524.30px;width:282px;height:31.80px;background:#ffffff"></div>
<div class="td" style="left:912px;top:524.30px;color:#333">23 Agosto 2025</div>
<div class="td num" style="left:1069px;width:115px;top:524.30px">72.471</div>
<div class="vsep" style="left:1068px;top:524.30px;height:31.80px"></div>
<div class="hsep" style="left:907px;top:555.10px;width:282px"></div>
<div class="tr" style="left:907px;top:556.10px;width:282px;height:31.80px;background:#f4f4f4"></div>
<div class="td" style="left:912px;top:556.10px;color:#c41a1a">24 Agosto 2025</div>
<div class="td num" style="left:1069px;width:115px;top:556.10px">78.551</div>
<div class="vsep" style="left:1068px;top:556.10px;height:31.80px"></div>
<div class="hsep" style="left:907px;top:586.90px;width:282px"></div>
<div class="tr" style="left:907px;top:587.90px;width:282px;height:31.80px;background:#ffffff"></div>
<div class="td" style="left:912px;top:587.90px;color:#333">25 Agosto 2025</div>
<div class="td num" style="left:1069px;width:115px;top:587.90px">92.191</div>
<div class="vsep" style="left:1068px;top:587.90px;height:31.80px"></div>
<div class="hsep" style="left:907px;top:618.70px;width:282px"></div>
<div class="tr" style="left:907px;top:619.70px;width:282px;height:31.80px;background:#f4f4f4"></div>
<div class="td" style="left:912px;top:619.70px;color:#333">26 Agosto 2025</div>
<div class="td num" style="left:1069px;width:115px;top:619.70px">81.829</div>
<div class="vsep" style="left:1068px;top:619.70px;height:31.80px"></div>
<div class="hsep" style="left:907px;top:650.50px;width:282px"></div>
<div class="tr" style="left:907px;top:651.50px;width:282px;height:31.80px;background:#ffffff"></div>
<div class="td" style="left:912px;top:651.50px;color:#333">27 Agosto 2025</div>
<div class="td num" style="left:1069px;width:115px;top:651.50px">77.032</div>
<div class="vsep" style="left:1068px;top:651.50px;height:31.80px"></div>
<div class="hsep" style="left:907px;top:682.30px;width:282px"></div>
<div class="tr" style="left:907px;top:683.30px;width:282px;height:31.80px;background:#f4f4f4"></div>
<div class="td" style="left:912px;top:683.30px;color:#333">28 Agosto 2025</div>
<div class="td num" style="left:1069px;width:115px;top:683.30px">85.004</div>
<div class="vsep" style="left:1068px;top:683.30px;height:31.80px"></div>
<div class="hsep" style="left:907px;top:714.10px;width:282px"></div>
<div class="tr" style="left:907px;top:715.10px;width:282px;height:31.80px;background:#ffffff"></div>
<div class="td" style="left:912px;top:715.10px;color:#333">29 Agosto 2025</div>
<div class="td num" style="left:1069px;width:115px;top:715.10px">93.262</div>
<div class="vsep" style="left:1068px;top:715.10px;height:31.80px"></div>
<div class="hsep" style="left:907px;top:745.90px;width:282px"></div>
<div class="tr" style="left:907px;top:746.90px;width:282px;height:31.80px;background:#f4f4f4"></div>
<div class="td" style="left:912px;top:746.90px;color:#333">30 Agosto 2025</div>
<div class="td num" style="left:1069px;width:115px;top:746.90px">87.222</div>
<div class="vsep" style="left:1068px;top:746.90px;height:31.80px"></div>
<div class="hsep" style="left:907px;top:777.70px;width:282px"></div>
<div class="tr" style="left:907px;top:778.70px;width:282px;height:31.80px;background:#ffffff"></div>
<div class="td" style="left:912px;top:778.70px;color:#c41a1a">31 Agosto 2025</div>
<div class="td num" style="left:1069px;width:115px;top:778.70px">115.700</div>
<div class="vsep" style="left:1068px;top:778.70px;height:31.80px"></div>
<div class="hsep" style="left:907px;top:809.50px;width:282px"></div>
<div class="tr" style="left:907px;top:810.50px;width:282px;height:31.80px;background:#fff"></div>
<div class="hsep" style="left:907px;top:841.30px;width:282px"></div>
<div class="tr" style="left:907px;top:842.30px;width:282px;height:31.80px;background:#fff"></div>
<div style="position:absolute;left:621px;top:491px;width:2px;height:383px;background:#9a9a9a"></div>
<div style="position:absolute;left:905px;top:491px;width:2px;height:383px;background:#9a9a9a"></div>

</body></html>
